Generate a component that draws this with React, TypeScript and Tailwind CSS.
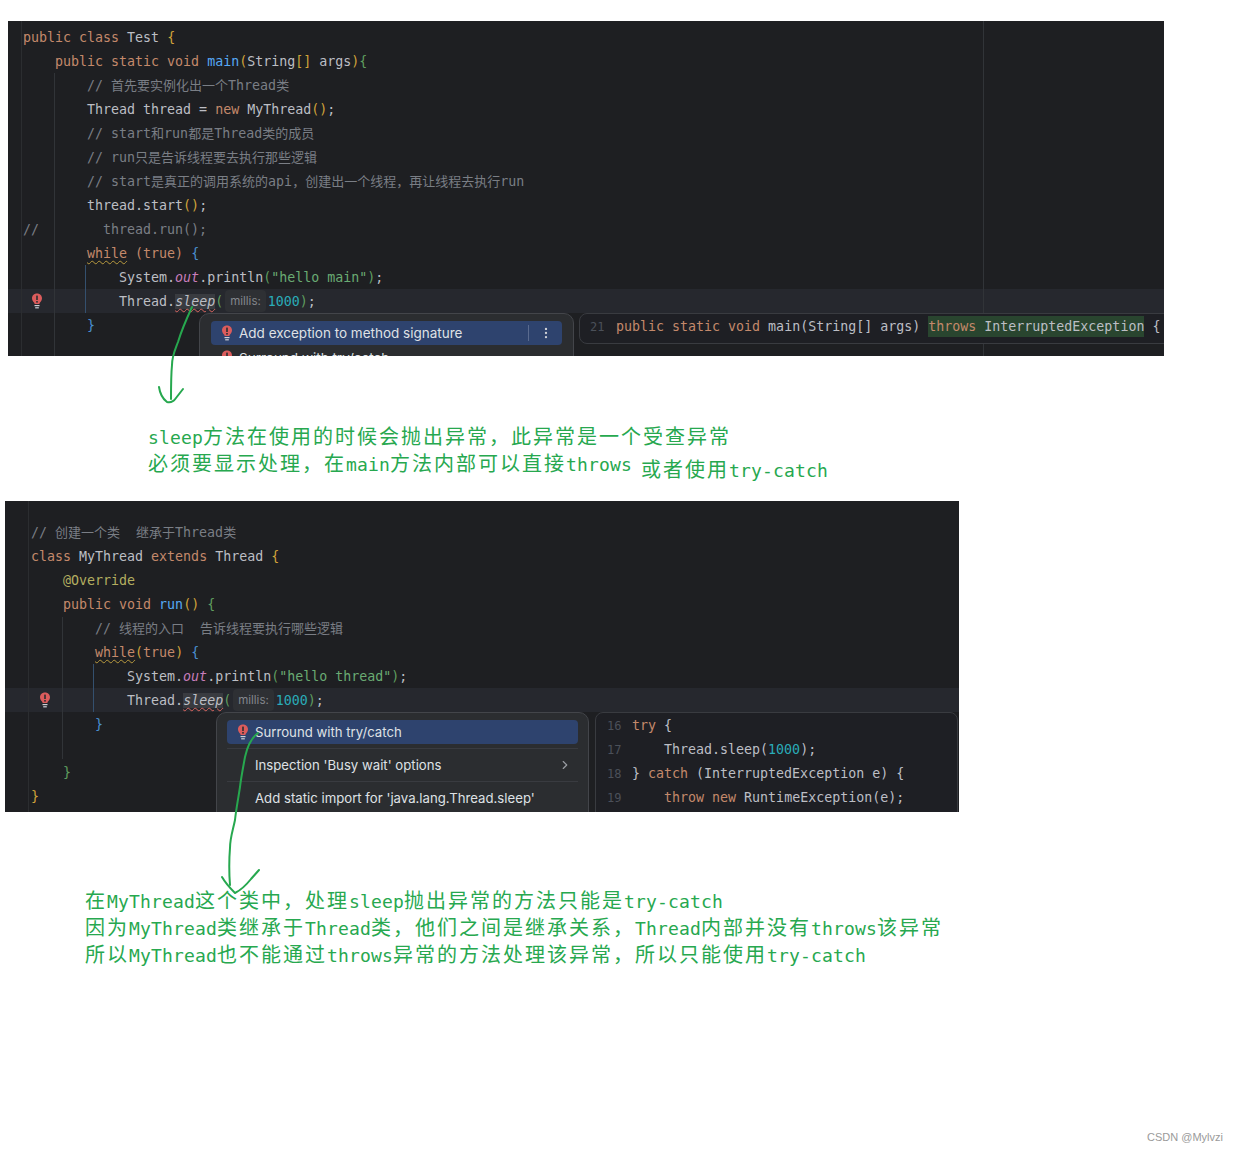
import type { ReactNode } from 'react';
import { ChevronRight, EllipsisVertical } from 'lucide-react';

const Kw = ({ children }: { children: ReactNode }) => <span className="text-[#c4896b]">{children}</span>;
const Fn = ({ children }: { children: ReactNode }) => <span className="text-[#56a8f5]">{children}</span>;
const Str = ({ children }: { children: ReactNode }) => <span className="text-[#6aab73]">{children}</span>;
const Num = ({ children }: { children: ReactNode }) => <span className="text-[#2aacb8]">{children}</span>;
const Y = ({ children }: { children: ReactNode }) => <span className="text-[#d0a33a]">{children}</span>;
const G = ({ children }: { children: ReactNode }) => <span className="text-[#5f9e5f]">{children}</span>;
const B = ({ children }: { children: ReactNode }) => <span className="text-[#4a8fcf]">{children}</span>;

// 注释：中文字符宽 13px，英文 8px
function Cm({ text }: { text: string }) {
  return (
    <span className="text-[#7a7e85]">
      {text.split(/([^\x00-\x7f]+)/).map((run, i) =>
        i % 2 === 1 ? (
          <span key={i} className="text-[13px]">{run}</span>
        ) : (
          <span key={i}>{run}</span>
        ),
      )}
    </span>
  );
}

// 一行代码，高度固定 24px
function Line({ children, active }: { children?: ReactNode; active?: boolean }) {
  return <div className={active ? 'h-6 bg-[#26282e] pt-px' : 'h-6 pt-px'}>{children}</div>;
}

function Bulb({ className }: { className: string }) {
  return (
    <svg className={className} width="12" height="16" viewBox="0 0 12 16">
      <path d="M6 0.5C2.9 0.5 1 2.7 1 5.2c0 2 1.1 3.2 2 4.3.4.5.6 1 .6 1.5h4.8c0-.5.2-1 .6-1.5.9-1.1 2-2.3 2-4.3C11 2.7 9.1 0.5 6 0.5z" fill="#db5c5c" />
      <rect x="5.2" y="2.6" width="1.6" height="4.4" fill="#2b2d30" />
      <rect x="5.2" y="8" width="1.6" height="1.6" fill="#2b2d30" />
      <rect x="3.5" y="12" width="5" height="1.2" fill="#ced0d6" />
      <rect x="4.2" y="14.2" width="3.6" height="1.2" fill="#ced0d6" />
    </svg>
  );
}

function Sleep() {
  return (
    <>
      Thread.
      <span className="bg-[#393b40] italic underline decoration-wavy decoration-[#d9655f] decoration-1 underline-offset-2">sleep</span>
      <G>(</G>
      <span className="mx-[2px] inline-block h-[22px] rounded-[4px] bg-[#2e3034] px-[5px] align-top font-['Inter',sans-serif] text-[11.5px] leading-[22px] text-[#84878d]">millis:</span>
      <Num>1000</Num>
      <G>)</G>;
    </>
  );
}

function Annotation({ text }: { text: string }) {
  // 中文和英文的宽度不一样，分开渲染
  return (
    <div className="h-[27px]">
      {text.split(/([\x00-\x7f]+)/).map((run, i) =>
        i % 2 === 1 ? (
          <span key={i} className="font-['DejaVu_Sans_Mono',monospace] text-[18px] leading-none tracking-[0.16px]">{run}</span>
        ) : (
          <span key={i}>{run}</span>
        ),
      )}
    </div>
  );
}

const codeFont = "font-['DejaVu_Sans_Mono','Noto_Sans_CJK_SC',monospace] text-[13.3px] leading-6 whitespace-pre text-[#bcbec4]";
const noteFont = "font-['Noto_Sans_CJK_SC',sans-serif] text-[20px] leading-[27px] tracking-[2px] text-[#27a84f] whitespace-pre";

export default function App() {
  return (
    <div className="relative h-[1153px] w-[1237px] overflow-hidden bg-white pt-[21px]">
      {/* 第一张截图 */}
      <div className={`relative ml-2 h-[335px] w-[1156px] overflow-hidden bg-[#1e1f22] pt-1 ${codeFont}`}>
        <div className="absolute top-0 bottom-0 left-[13px] w-px bg-[#2b2d30]" />
        <div className="absolute top-0 bottom-0 left-[975px] w-px bg-[#313438]" />
        <div className="absolute top-[52px] bottom-0 left-[46px] w-px bg-[#313438]" />
        <div className="absolute top-[244px] left-[77px] h-12 w-px bg-[#34506e]" />
        <div className="pl-[15px]">
          <Line><Kw>public class</Kw> Test <Y>{'{'}</Y></Line>
          <Line>{'    '}<Kw>public static void</Kw> <Fn>main</Fn><Y>(</Y>String<Y>[]</Y> args<Y>)</Y><G>{'{'}</G></Line>
          <Line><Cm text="        // 首先要实例化出一个Thread类" /></Line>
          <Line>{'        Thread thread = '}<Kw>new</Kw> MyThread<Y>()</Y>;</Line>
          <Line><Cm text="        // start和run都是Thread类的成员" /></Line>
          <Line><Cm text="        // run只是告诉线程要去执行那些逻辑" /></Line>
          <Line><Cm text="        // start是真正的调用系统的api，创建出一个线程，再让线程去执行run" /></Line>
          <Line>{'        thread.start'}<Y>()</Y>;</Line>
          <Line><Cm text="//        thread.run();" /></Line>
          <Line>
            {'        '}
            <span className="text-[#c4896b] underline decoration-wavy decoration-[#b89a3e] decoration-1 underline-offset-2">while</span>
            {' '}<Kw>(true)</Kw> <B>{'{'}</B>
          </Line>
          <Line>{'            System.'}<span className="text-[#c77dbb] italic">out</span>.println<G>(</G><Str>"hello main"</Str><G>)</G>;</Line>
        </div>
        <Line active>
          <div className="pl-[15px]">{'            '}<Sleep /></div>
        </Line>
        <div className="pl-[15px]">
          <Line>{'        '}<B>{'}'}</B></Line>
        </div>
        <Bulb className="absolute top-[272px] left-[23px]" />

        {/* 快速修复弹窗 */}
        <div className="absolute top-[292px] left-[191px] h-[80px] w-[375px] rounded-[10px] border border-[#43454a] bg-[#2b2d30] px-[11px] pt-[7px] font-['Inter',sans-serif] text-[13.5px] text-[#dfe1e5]">
          <div className="relative flex h-6 items-center rounded-[4px] bg-[#2e436e] pl-[28px] leading-6">
            <Bulb className="absolute top-[4px] left-[10px]" />
            Add exception to method signature
            <div className="absolute top-[4px] right-[33px] h-4 w-px bg-[#5a6b8f]" />
            <EllipsisVertical className="absolute top-[5px] right-[9px] text-[#ced0d6]" size={14} />
          </div>
          <div className="relative mt-px flex h-6 items-center pl-[28px] leading-6">
            <Bulb className="absolute top-[4px] left-[10px]" />
            Surround with try/catch
          </div>
        </div>

        {/* 预览 */}
        <div className="absolute top-[292px] left-[571px] flex h-[31px] w-[620px] rounded-[8px] border border-[#393b40] bg-[#1e1f24]">
          <span className="w-[36px] pt-px pl-[10px] text-[12px] text-[#4b5059]">21</span>
          <span className="pt-px"><Kw>public static void</Kw> main(String[] args) <span className="bg-[#29452f] py-[3px]"><Kw>throws</Kw> InterruptedException</span> {'{'}</span>
        </div>
      </div>

      <div className={`mt-[66px] ml-[148px] ${noteFont}`}>
        <Annotation text="sleep方法在使用的时候会抛出异常，此异常是一个受查异常" />
        <div className="flex h-[27px]">
          <Annotation text="必须要显示处理，在main方法内部可以直接throws" />
          <div className="mt-[6px] ml-[9px]"><Annotation text="或者使用try-catch" /></div>
        </div>
      </div>

      {/* 第二张截图 */}
      <div className={`relative mt-[25px] ml-[5px] h-[311px] w-[954px] overflow-hidden bg-[#1e1f22] pt-[19px] ${codeFont}`}>
        <div className="absolute top-0 bottom-0 left-[23px] w-px bg-[#2b2d30]" />
        <div className="absolute top-[116px] left-[57px] h-[142px] w-px bg-[#313438]" />
        <div className="absolute top-[163px] left-[88px] h-12 w-px bg-[#34506e]" />
        <div className="pl-[26px]">
          <Line><Cm text="// 创建一个类  继承于Thread类" /></Line>
          <Line><Kw>class</Kw> MyThread <Kw>extends</Kw> Thread <Y>{'{'}</Y></Line>
          <Line>{'    '}<span className="text-[#b3ae60]">@Override</span></Line>
          <Line>{'    '}<Kw>public void</Kw> <Fn>run</Fn><Y>()</Y> <G>{'{'}</G></Line>
          <Line><Cm text="        // 线程的入口  告诉线程要执行哪些逻辑" /></Line>
          <Line>
            {'        '}
            <span className="text-[#c4896b] underline decoration-wavy decoration-[#b89a3e] decoration-1 underline-offset-2">while</span>
            <Y>(</Y><Kw>true</Kw><Y>)</Y> <B>{'{'}</B>
          </Line>
          <Line>{'            System.'}<span className="text-[#c77dbb] italic">out</span>.println<G>(</G><Str>"hello thread"</Str><G>)</G>;</Line>
        </div>
        <Line active>
          <div className="pl-[26px]">{'            '}<Sleep /></div>
        </Line>
        <div className="pl-[26px]">
          <Line>{'        '}<B>{'}'}</B></Line>
          <Line />
          <Line>{'    '}<G>{'}'}</G></Line>
          <Line><Y>{'}'}</Y></Line>
        </div>
        <Bulb className="absolute top-[191px] left-[34px]" />

        <div className="absolute top-[211px] left-[211px] h-[120px] w-[373px] rounded-[10px] border border-[#43454a] bg-[#2b2d30] px-[10px] pt-[7px] font-['Inter',sans-serif] text-[13.2px] text-[#dfe1e5]">
          <div className="relative flex h-6 items-center rounded-[4px] bg-[#2e436e] pl-[28px] leading-6">
            <Bulb className="absolute top-[4px] left-[10px]" />
            Surround with try/catch
          </div>
          <div className="mt-[4px] flex h-[33px] items-center justify-between border-t border-[#393b40] pr-[6px] pl-[28px]">
            Inspection 'Busy wait' options
            <ChevronRight className="text-[#9a9da3]" size={14} />
          </div>
          <div className="flex h-[33px] items-center border-t border-[#393b40] pl-[28px]">
            Add static import for 'java.lang.Thread.sleep'
          </div>
        </div>

        <div className="absolute top-[211px] left-[590px] h-[120px] w-[363px] rounded-[8px] border border-[#393b40] bg-[#1e1f24] pl-[11px]">
          <div className="flex h-6 pt-px"><span className="w-[25px] text-[12px] text-[#4b5059]">16</span><span><Kw>try</Kw> {'{'}</span></div>
          <div className="flex h-6 pt-px"><span className="w-[25px] text-[12px] text-[#4b5059]">17</span><span>{'    Thread.sleep('}<Num>1000</Num>);</span></div>
          <div className="flex h-6 pt-px"><span className="w-[25px] text-[12px] text-[#4b5059]">18</span><span>{'} '}<Kw>catch</Kw> (InterruptedException e) {'{'}</span></div>
          <div className="flex h-6 pt-px"><span className="w-[25px] text-[12px] text-[#4b5059]">19</span><span>{'    '}<Kw>throw new</Kw> RuntimeException(e);</span></div>
        </div>
      </div>

      <div className={`mt-[74px] ml-[85px] ${noteFont}`}>
        <Annotation text="在MyThread这个类中，处理sleep抛出异常的方法只能是try-catch" />
        <Annotation text="因为MyThread类继承于Thread类，他们之间是继承关系，Thread内部并没有throws该异常" />
        <Annotation text="所以MyThread也不能通过throws异常的方法处理该异常，所以只能使用try-catch" />
      </div>

      {/* 水印 */}
      <div className="mt-[163px] flex justify-end pr-[14px] font-['Liberation_Sans',sans-serif] text-[11px] leading-[14px] text-[#9a9a9a]">CSDN @Mylvzi</div>

      {/* 手画的绿色箭头 */}
      <svg className="pointer-events-none absolute top-0 left-0" width="1237" height="1153" fill="none" stroke="#27a84f" strokeWidth="2" strokeLinecap="round" strokeLinejoin="round">
        <path d="M192 307C186 320 181 332 178 342C175 350 172 356 172 365C171 375 171 385 171 399" />
        <path d="M159 387C160 394 163 399 167 402C171 403 174 401 176 398L183 389" />
        <path d="M258 733C251 738 247 748 245 757C243 768 241 778 240 787C238 800 236 810 235 820C233 830 230 838 230 848C229 860 229 872 230 885" />
        <path d="M222 877C226 884 231 889 235 893C241 890 247 884 251 879L259 870" />
      </svg>
    </div>
  );
}
